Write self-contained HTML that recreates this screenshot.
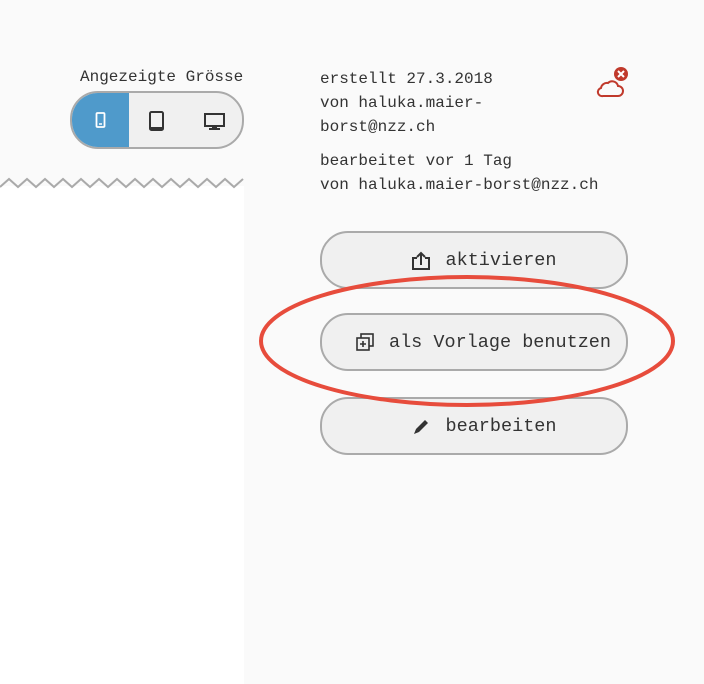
<!DOCTYPE html>
<html><head><style>
body{margin:0;width:704px;height:684px;background:#fafafa;position:relative;overflow:hidden;font-family:"Liberation Mono",monospace;color:#333;font-size:16px}
.a{position:absolute}
.btn{position:absolute;left:320px;height:54px;border:2px solid #aaa;border-radius:28px;background:#f0f0f0;display:flex;align-items:center;justify-content:center;font-size:18.5px;color:#333;padding-left:20px;width:284px}
.btn svg{margin-right:14px}
</style></head><body>
<div class="a" style="left:0;top:186px;width:244px;height:498px;background:#fff"></div>
<svg class="a" style="left:0;top:176px" width="244" height="14"><polyline fill="none" stroke="#aaa" stroke-width="2" points="0,11 9,3 18,11 27,3 36,11 45,3 54,11 63,3 72,11 81,3 90,11 99,3 108,11 117,3 126,11 135,3 144,11 153,3 162,11 171,3 180,11 189,3 198,11 207,3 216,11 225,3 234,11 243,3"/></svg>
<div class="a" style="left:80px;top:68px;font-size:16px">Angezeigte Grösse</div>
<div class="a" style="left:70px;top:91px;width:170px;height:54px;border:2px solid #aaa;border-radius:28px;background:#f0f0f0;overflow:hidden">
 <div class="a" style="left:0;top:0;width:57px;height:54px;background:#4f9acb"></div>
 <svg class="a" style="left:23px;top:19px" width="12" height="17"><rect x="1.5" y="1" width="8" height="14" rx="1" fill="none" stroke="#fff" stroke-width="1.8"/><line x1="4" y1="12" x2="7" y2="12" stroke="#fff" stroke-width="1.5"/></svg>
 <svg class="a" style="left:77px;top:18px" width="16" height="20"><rect x="1" y="1" width="13" height="18" rx="1.5" fill="none" stroke="#333" stroke-width="2"/><rect x="1" y="16" width="13" height="3" fill="#333"/></svg>
 <svg class="a" style="left:132px;top:20px" width="22" height="18"><rect x="1" y="1" width="19" height="12" fill="none" stroke="#333" stroke-width="2"/><rect x="8" y="13" width="5" height="3" fill="#333"/><rect x="5" y="15" width="11" height="2" fill="#333"/></svg>
</div>
<div class="a" style="left:320px;top:67px;line-height:24px">erstellt 27.3.2018<br>von haluka.maier-<br>borst@nzz.ch</div>
<div class="a" style="left:320px;top:149px;line-height:24px">bearbeitet vor 1 Tag<br>von haluka.maier-borst@nzz.ch</div>
<svg class="a" style="left:596px;top:65px" width="34" height="34"><path d="M7 31h15a5 5 0 0 0 0-10a6 6 0 0 0-10-3a6 6 0 0 0-7 5a4 4 0 0 0 2 8z" fill="none" stroke="#c0392b" stroke-width="2"/><circle cx="25" cy="9" r="7" fill="#c0392b"/><path d="M22 6l6 6M28 6l-6 6" stroke="#fff" stroke-width="2"/></svg>
<div class="btn" style="top:231px"><svg width="20" height="20"><path d="M6 8H2v11h16V8h-4" fill="none" stroke="#333" stroke-width="2"/><path d="M10 15V3M6 7l4-4 4 4" fill="none" stroke="#333" stroke-width="2"/></svg>aktivieren</div>
<div class="btn" style="top:313px;padding-left:18px;width:286px"><svg width="20" height="20"><rect x="6" y="2" width="12" height="12" fill="none" stroke="#333" stroke-width="1.6"/><rect x="2" y="6" width="12" height="12" fill="#f0f0f0" stroke="#333" stroke-width="1.6"/><path d="M8 9v6M5 12h6" stroke="#333" stroke-width="1.6"/></svg>als Vorlage benutzen</div>
<div class="btn" style="top:397px"><svg width="20" height="20"><path d="M3 18l2-5 9-9 3 3-9 9z" fill="#333"/></svg>bearbeiten</div>
<svg class="a" style="left:0;top:0" width="704" height="684"><ellipse cx="467" cy="341" rx="206" ry="64" fill="none" stroke="#e74c3c" stroke-width="4"/></svg>
</body></html>
